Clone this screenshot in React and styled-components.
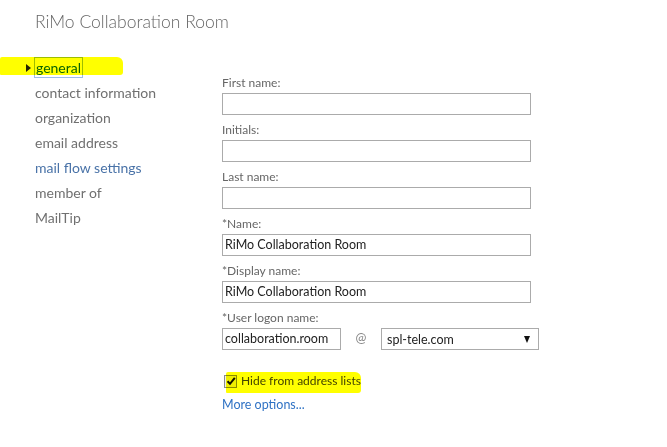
import React from "react";
import styled, { createGlobalStyle } from "styled-components";

const GlobalStyle = createGlobalStyle`
  html, body {
    margin: 0;
    padding: 0;
    background: #ffffff;
    font-family: Lato, "Open Sans", sans-serif;
  }
`;

const Page = styled.div`
  width: 667px;
  height: 447px;
  position: relative;
  overflow: hidden;
  background: #fff;
`;

const Title = styled.h1`
  margin: 0;
  padding: 10px 0 0 35px;
  font-size: 17.5px;
  line-height: 24px;
  font-weight: 300;
  color: #666;
`;

const Body = styled.div`
  display: flex;
  padding-top: 21px;
`;

const Nav = styled.ul`
  list-style: none;
  margin: 0;
  padding: 0 0 0 35px;
  width: 222px;
  box-sizing: border-box;
`;

const NavItem = styled.li`
  position: relative;
  height: 25px;
  line-height: 25px;
  font-size: 14px;
  color: ${(p) => (p.$link ? "#4a73a8" : "#707070")};
`;

const Current = styled.span`
  display: inline-block;
  line-height: 19px;
  margin-left: -1px;
  padding: 0 1px;
  border: 1px solid #9dbde6;
  color: #0a64c0;
`;

const Arrow = styled.span`
  position: absolute;
  left: -9px;
  top: 9px;
  width: 0;
  height: 0;
  border-top: 4px solid transparent;
  border-bottom: 4px solid transparent;
  border-left: 5px solid #222;
`;

const Marker = styled.span`
  position: absolute;
  background: #ffff00;
  mix-blend-mode: multiply;
  pointer-events: none;
  border-radius: 2px 6px 3px 1px;
  left: ${(p) => p.$left}px;
  top: ${(p) => p.$top}px;
  width: ${(p) => p.$width}px;
  height: ${(p) => p.$height}px;
`;

const Form = styled.div`
  display: flex;
  flex-direction: column;
  align-items: flex-start;
  padding-top: 20px;
`;

const Field = styled.div`
  margin-bottom: 7px;
`;

const Label = styled.div`
  font-size: 12px;
  line-height: 16px;
  padding-bottom: 2px;
  color: #666;
`;

const Input = styled.div`
  box-sizing: border-box;
  width: ${(p) => p.$width || 309}px;
  height: 22px;
  border: 1px solid #ababab;
  padding: 0 2px;
  font-size: 12.5px;
  line-height: 20px;
  color: #222;
  white-space: nowrap;
  overflow: hidden;
`;

const LogonRow = styled.div`
  display: flex;
  align-items: center;
`;

const At = styled.span`
  width: 40px;
  text-align: center;
  font-size: 13px;
  color: #888;
  margin-top: -5px;
`;

const Select = styled.div`
  box-sizing: border-box;
  width: 158px;
  height: 22px;
  border: 1px solid #ababab;
  padding: 0 8px 0 5px;
  display: flex;
  align-items: center;
  justify-content: space-between;
  font-size: 12.5px;
  color: #222;
`;

const Caret = styled.span`
  width: 0;
  height: 0;
  border-left: 3.5px solid transparent;
  border-right: 3.5px solid transparent;
  border-top: 7px solid #111;
`;

const CheckRow = styled.label`
  display: flex;
  align-items: center;
  margin-top: 13px;
  padding-left: 2px;
  font-size: 12px;
  line-height: 22px;
  color: #444;
`;

const Box = styled.span`
  box-sizing: border-box;
  width: 13px;
  height: 13px;
  border: 1px solid #8a8a8a;
  background: #eeeeee;
  margin-right: 4px;
  display: flex;
  align-items: center;
  justify-content: center;
`;

const MoreLink = styled.a`
  margin-top: 2px;
  font-size: 12.5px;
  line-height: 22px;
  color: #2f72c4;
  text-decoration: none;
`;

const navItems = [
  "contact information",
  "organization",
  "email address",
  "mail flow settings",
  "member of",
  "MailTip",
];

const fields = [
  { label: "First name:", value: "" },
  { label: "Initials:", value: "" },
  { label: "Last name:", value: "" },
  { label: "*Name:", value: "RiMo Collaboration Room" },
  { label: "*Display name:", value: "RiMo Collaboration Room" },
];

export default function App() {
  return (
    <Page>
      <GlobalStyle />
      <Title>RiMo Collaboration Room</Title>
      <Body>
        <Nav>
          <NavItem>
            <Arrow />
            <Current>general</Current>
          </NavItem>
          {navItems.map((item) => (
            <NavItem key={item} $link={item === "mail flow settings"}>
              {item}
            </NavItem>
          ))}
        </Nav>
        <Form>
          {fields.map((f) => (
            <Field key={f.label}>
              <Label>{f.label}</Label>
              <Input>{f.value}</Input>
            </Field>
          ))}
          <Field>
            <Label>*User logon name:</Label>
            <LogonRow>
              <Input $width={119}>collaboration.room</Input>
              <At>@</At>
              <Select>
                spl-tele.com
                <Caret />
              </Select>
            </LogonRow>
          </Field>
          <CheckRow>
            <Box>
              <svg width="10" height="10" viewBox="0 0 10 10">
                <path d="M1.5 5.2 L4 7.8 L8.8 1.8" fill="none" stroke="#111" strokeWidth="2" />
              </svg>
            </Box>
            Hide from address lists
          </CheckRow>
          <MoreLink href="#more">More options...</MoreLink>
        </Form>
      </Body>
      <Marker $left={0} $top={57} $width={123} $height={18} />
      <Marker $left={226} $top={372} $width={135} $height={21} />
    </Page>
  );
}
